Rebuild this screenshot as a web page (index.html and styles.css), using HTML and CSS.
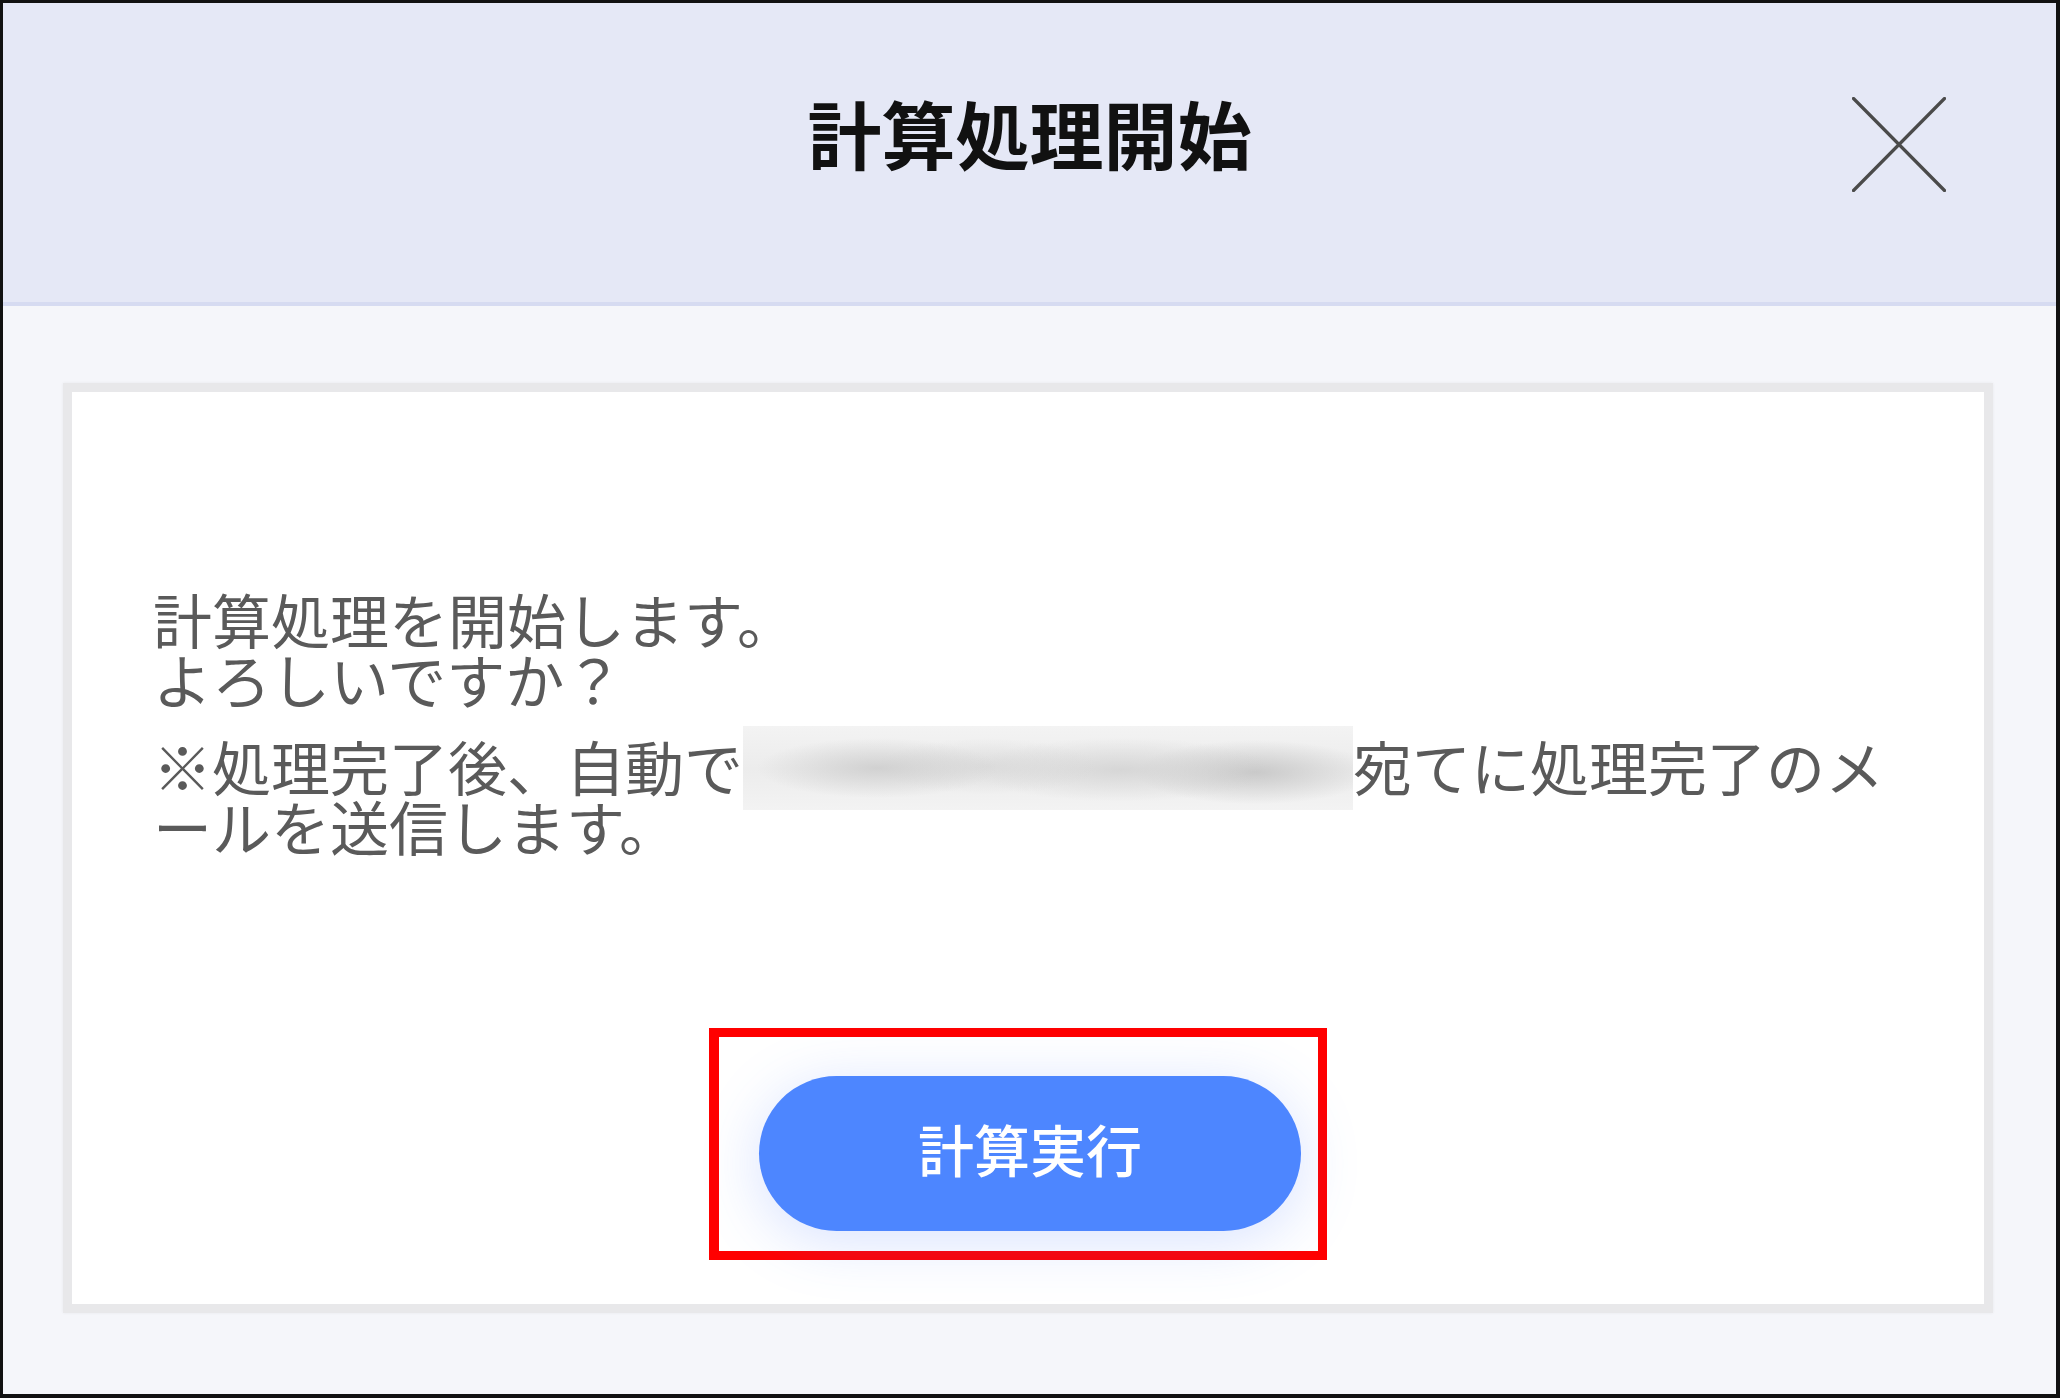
FILE: index.html
```html
<!DOCTYPE html>
<html lang="ja">
<head>
<meta charset="utf-8">
<title>計算処理開始</title>
<link rel="stylesheet" href="styles.css">
</head>
<body>
<div class="dialog">
  <header class="dialog-header">
    <div class="spacer"></div>
    <h1 class="dialog-title">計算処理開始</h1>
    <button class="close-btn" aria-label="閉じる">
      <svg width="94" height="95" viewBox="0 0 94 95" aria-hidden="true">
        <line x1="1.5" y1="1.5" x2="92.5" y2="93.5" stroke="#4a4a4a" stroke-width="3.2" stroke-linecap="round"/>
        <line x1="92.5" y1="1.5" x2="1.5" y2="93.5" stroke="#4a4a4a" stroke-width="3.2" stroke-linecap="round"/>
      </svg>
    </button>
  </header>
  <main class="dialog-body">
    <section class="card">
      <div class="message">
        <p class="msg-line">計算処理を開始します。<br>よろしいですか？</p>
        <p class="msg-line note">※処理完了後、自動で<span class="redacted" aria-label="メールアドレス"></span>宛てに処理完了のメールを送信します。</p>
      </div>
      <div class="highlight">
        <button class="run-btn"><span class="run-label">計算実行</span></button>
      </div>
    </section>
  </main>
</div>
</body>
</html>
```

FILE: styles.css
```css
* { box-sizing: border-box; }

html, body {
  margin: 0;
  padding: 0;
}

body {
  width: 2060px;
  height: 1398px;
  font-family: "Noto Sans CJK JP", "Noto Sans", sans-serif;
  background: #ffffff;
}

.dialog {
  width: 2060px;
  height: 1398px;
  border-style: solid;
  border-color: #111111;
  border-width: 3px 4px 4px 3px;
  background: #f5f6fa;
  display: flex;
  flex-direction: column;
}

.dialog-header {
  height: 303px;
  flex: none;
  background: #e5e8f6;
  border-bottom: 4px solid #d6dbf1;
  display: grid;
  grid-template-columns: 1fr auto 1fr;
  align-items: start;
  padding: 92px 0 0 0;
}

.dialog-title {
  margin: 0;
  font-size: 74px;
  line-height: 74px;
  font-weight: 700;
  color: #111111;
  letter-spacing: 0;
  text-align: center;
}

.close-btn {
  justify-self: end;
  margin: 2px 110px 0 0;
  padding: 0;
  border: 0;
  background: transparent;
  width: 94px;
  height: 95px;
  display: block;
}

.close-btn svg { display: block; }

.dialog-body {
  flex: 1;
  padding: 77px 63px 81px 60px;
  display: flex;
}

.card {
  flex: 1;
  background: #ffffff;
  border: 9px solid #e8e8ea;
  box-shadow: 0 0 3px rgba(0, 0, 0, 0.06);
  display: flex;
  flex-direction: column;
  padding-top: 197px;
}

.message {
  padding-left: 81px;
  width: 1850px;
  color: #5a5a5a;
  font-size: 59px;
  line-height: 60px;
  font-weight: 400;
  line-break: loose;
}

.msg-line {
  margin: 0;
}

.msg-line.note {
  margin-top: 26px;
}

.redacted {
  display: inline-block;
  width: 610px;
  height: 84px;
  margin: -9px 0 -15px 0;
  vertical-align: -4px;
  background:
    radial-gradient(ellipse 120px 30px at 22% 50%, rgba(200,200,200,0.75), rgba(200,200,200,0) 100%),
    radial-gradient(ellipse 110px 28px at 40% 48%, rgba(210,210,210,0.6), rgba(210,210,210,0) 100%),
    radial-gradient(ellipse 150px 32px at 62% 52%, rgba(205,205,205,0.7), rgba(205,205,205,0) 100%),
    radial-gradient(ellipse 120px 32px at 84% 55%, rgba(195,195,195,0.85), rgba(195,195,195,0) 100%),
    linear-gradient(#f3f3f3, #ececec 50%, #f3f3f3);
}

.highlight {
  align-self: center;
  margin: 172px 20px 0 0;
  border: 9px solid #ff0000;
  border-left-width: 10px;
  padding: 39px 17px 20px 40px;
}

.run-btn {
  width: 542px;
  height: 155px;
  border: 0;
  border-radius: 78px;
  background: #4d86ff;
  box-shadow: 0 10px 60px rgba(77, 125, 255, 0.22);
  color: #ffffff;
  font-family: "Noto Sans CJK JP", "Noto Sans", sans-serif;
  font-size: 56px;
  line-height: 56px;
  font-weight: 500;
  display: flex;
  align-items: center;
  justify-content: center;
  padding: 0 0 12px 0;
  margin: 0;
}

.run-label { display: block; }
```
